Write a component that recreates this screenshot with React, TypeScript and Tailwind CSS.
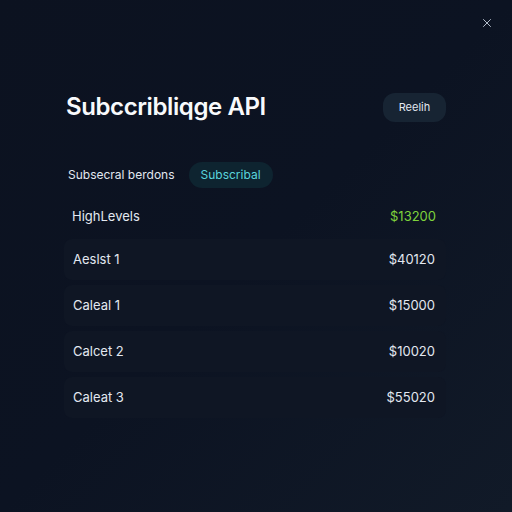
import { X } from "lucide-react";

interface Row {
  name: string;
  price: string;
  highlight?: boolean;
}

const rows: Row[] = [
  { name: "Aeslst 1", price: "$40120" },
  { name: "Caleal 1", price: "$15000" },
  { name: "Calcet 2", price: "$10020" },
  { name: "Caleat 3", price: "$55020" },
];

const App = () => {
  return (
    <div
      className="relative w-[512px] h-[512px] overflow-hidden bg-gradient-to-br from-[#0c1220] via-[#0c1322] to-[#111a28] text-white"
      style={{ fontFamily: "Inter, 'Noto Sans', sans-serif" }}
    >
      {/* Close */}
      <button className="absolute top-[16px] right-[18px] text-slate-300">
        <X size={14} strokeWidth={1.5} />
      </button>

      <div className="flex flex-col pt-[89px] pl-[64px] pr-[66px]">
        {/* Header */}
        <div className="flex items-center justify-between">
          <h1 className="pl-[2px] text-[24px] font-semibold tracking-[-0.4px] text-slate-50">
            Subccribliqge API
          </h1>
          <button className="h-[29px] w-[63px] rounded-xl bg-[#172433] text-[11px] text-slate-200">
            Reelih
          </button>
        </div>

        {/* Tabs */}
        <div className="mt-[37px] flex items-center gap-[14px] pl-[4px]">
          <span className="text-[12px] text-slate-200">Subsecral berdons</span>
          <span className="rounded-full bg-[#0e2430] px-[12px] py-[4px] text-[12px] text-[#5ad4dc]">
            Subscribal
          </span>
        </div>

        {/* Rows */}
        <div className="mt-[11px] flex items-center justify-between h-[36px] pl-[8px] pr-[10px]">
          <span className="text-[13px] text-slate-200">HighLevels</span>
          <span className="text-[13px] text-[#7ed33c]">$13200</span>
        </div>
        <div className="mt-[4px] flex flex-col gap-[5px]">
          {rows.map((row) => (
            <div
              key={row.name}
              className="flex items-center justify-between h-[41px] rounded-lg bg-[#0f1624] pl-[9px] pr-[11px]"
            >
              <span className="text-[13px] text-slate-200">{row.name}</span>
              <span className="text-[13px] text-slate-200">{row.price}</span>
            </div>
          ))}
        </div>
      </div>
    </div>
  );
};

export default App;
